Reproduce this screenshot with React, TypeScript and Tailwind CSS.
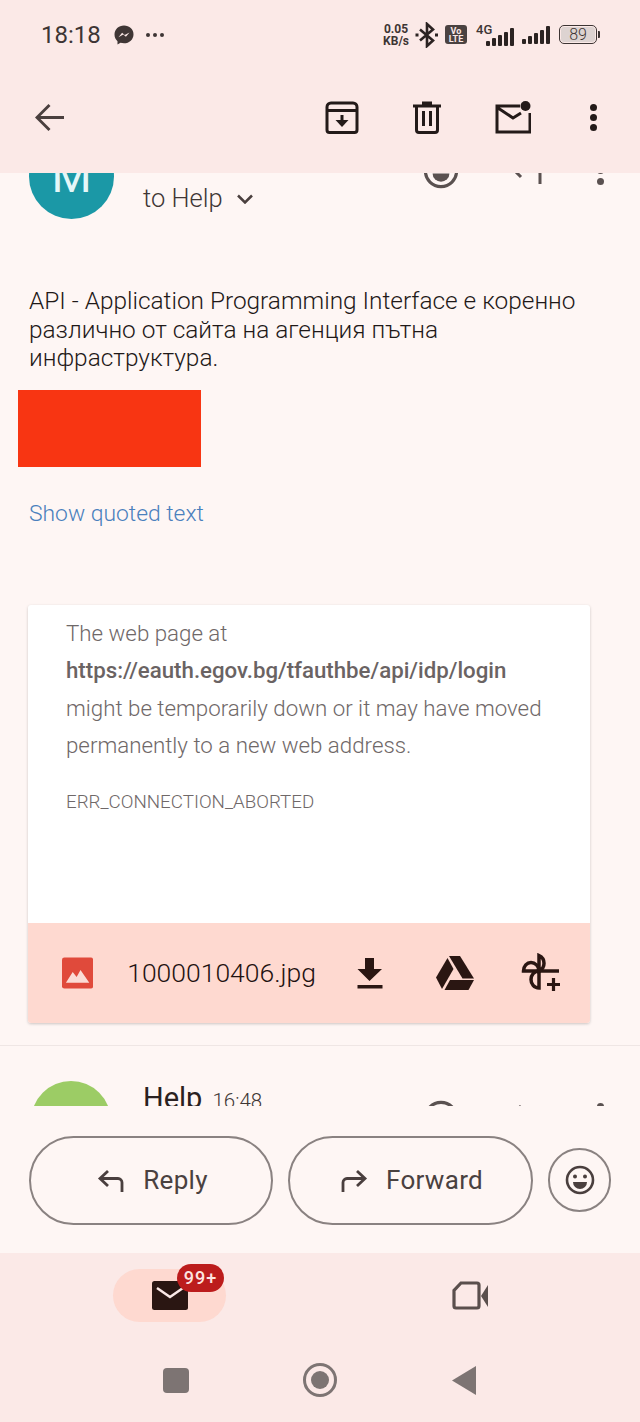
import React from "react";

const Dark = "#4a3f3e";

const Messenger = () => (
  <svg width="20" height="20" viewBox="0 0 20 20">
    <path d="M10 0.5C4.600 0.5 0.5 4.400 0.5 9.600c0 2.700 1.100 5 3 6.600v3.200l3-1.600c1.100.3 2.300.5 3.500.5 5.400 0 9.500-3.900 9.500-9.100S15.400.5 10 .5z" fill="#3f3635" />
    <path d="M4.500 12.200l3.600-4.400 2.600 2.200 4.800-2.600-3.600 4.400-2.600-2.200z" fill="#fbe9e7" />
  </svg>
);

const Bluetooth = () => (
  <svg width="24" height="26" viewBox="0 0 24 26" fill="none" stroke="#2b2322" strokeWidth="2.600">
    <path d="M5 7.500l13 11-6 5.500V2l6 5.500-13 11" />
    <rect x="0.5" y="11.500" width="3" height="3" fill="#2b2322" stroke="none" />
    <rect x="20" y="11.500" width="3" height="3" fill="#2b2322" stroke="none" />
  </svg>
);

const Signal = () => (
  <div className="flex items-end gap-[2px] h-[19px]">
    <div className="w-[4px] h-[5px] rounded-[1px] bg-[#2b2322]" />
    <div className="w-[4px] h-[8px] rounded-[1px] bg-[#2b2322]" />
    <div className="w-[4px] h-[11px] rounded-[1px] bg-[#2b2322]" />
    <div className="w-[4px] h-[14px] rounded-[1px] bg-[#2b2322]" />
    <div className="w-[4px] h-[18px] rounded-[1px] bg-[#2b2322]" />
  </div>
);

const StatusBar = () => (
  <div className="h-[69px] pl-[41px] pr-[40px] flex items-center justify-between">
    <div className="flex items-center">
      <span className="text-[24px] leading-none text-[#3d3534]">18:18</span>
      <div className="ml-[13px] flex"><Messenger /></div>
      <div className="ml-[12px] flex gap-[3px]">
        <div className="w-[4px] h-[4px] rounded-full bg-[#3d3534]" />
        <div className="w-[4px] h-[4px] rounded-full bg-[#3d3534]" />
        <div className="w-[4px] h-[4px] rounded-full bg-[#3d3534]" />
      </div>
    </div>
    <div className="flex items-center">
      <div className="flex flex-col items-center text-[12px] leading-[12px] font-bold text-[#3d3534]">
        <span>0.05</span>
        <span>KB/s</span>
      </div>
      <div className="ml-[6px] flex"><Bluetooth /></div>
      <div className="ml-[6px] w-[22px] h-[19px] rounded-[3px] bg-[#4a4241] flex flex-col items-center justify-center text-[9px] leading-[8px] font-bold text-[#fbe9e7]">
        <span>Vo</span>
        <span>LTE</span>
      </div>
      <div className="ml-[8px] relative w-[39px] h-[22px] flex justify-end items-end">
        <span className="absolute left-[1px] top-[-1px] text-[13px] leading-[13px] font-medium text-[#3d3534]">4G</span>
        <Signal />
      </div>
      <div className="ml-[8px]"><Signal /></div>
      <div className="ml-[9px] flex items-center">
        <div className="w-[38px] h-[19px] rounded-[5px] border border-[#3d3534] p-[1px] flex">
          <div className="flex-1 rounded-[3px] bg-[#ddd3d1] flex items-center justify-center text-[16px] font-light leading-none text-[#3d3534]">89</div>
        </div>
        <div className="ml-[1px] w-[2px] h-[7px] rounded-r-[1px] bg-[#3d3534]" />
      </div>
    </div>
  </div>
);

const Toolbar = () => (
  <div className="h-[104px] pl-[35px] pr-[43px] pb-[8px] flex items-center justify-between">
    <svg width="29" height="29" viewBox="0 0 30 30" fill="none" stroke={Dark} strokeWidth="3">
      <path d="M30 15H3M15 2L2 15l13 13" />
    </svg>
    <div className="flex items-center">
      <svg width="34" height="33" viewBox="0 0 34 33" fill="none" stroke="#231a19" strokeWidth="3">
        <path d="M2 9V6a4 4 0 0 1 4-4h22a4 4 0 0 1 4 4v3M2 6v23a2.500 2.500 0 0 0 2.500 2.500h25A2.500 2.500 0 0 0 32 29V6M3 9.500h28" />
        <path d="M17 14v8" />
        <path d="M10.500 19h13L17 26z" fill="#231a19" stroke="none" />
      </svg>
      <svg className="ml-[53px]" width="30" height="33" viewBox="0 0 30 33" fill="none" stroke="#231a19" strokeWidth="3">
        <path d="M1 5h28M10 2h10M4.500 5v24a2.500 2.500 0 0 0 2.500 2.500h16a2.500 2.500 0 0 0 2.500-2.500V5M11.500 10v15M18.500 10v15" />
      </svg>
      <svg className="ml-[53px]" width="36" height="33" viewBox="0 0 36 33" fill="none" stroke="#231a19" strokeWidth="3">
        <path d="M25 5H2v26h33V12M3 7l15 10 8-5" />
        <circle cx="30.500" cy="5" r="5" fill="#231a19" stroke="none" />
      </svg>
      <div className="ml-[59px] flex flex-col gap-[3px]">
        <div className="w-[7px] h-[7px] rounded-full bg-[#231a19]" />
        <div className="w-[7px] h-[7px] rounded-full bg-[#231a19]" />
        <div className="w-[7px] h-[7px] rounded-full bg-[#231a19]" />
      </div>
    </div>
  </div>
);

const SmileIcon = ({ size, color }: { size: number; color: string }) => (
  <svg width={size} height={size} viewBox="0 0 30 30">
    <circle cx="15" cy="15" r="13" fill="none" stroke={color} strokeWidth="2.600" />
    <circle cx="10" cy="11.500" r="2" fill={color} />
    <circle cx="20" cy="11.500" r="2" fill={color} />
    <path d="M8 17h14a7 7 0 0 1-14 0z" fill={color} />
  </svg>
);

const MessageActions = () => (
  <div className="flex items-start">
    <SmileIcon size={36} color="#5a5150" />
    <svg className="ml-[51px] mt-[5px]" width="32" height="26" viewBox="0 0 32 26" fill="none" stroke="#5a5150" strokeWidth="3">
      <path d="M11 1L2 10l9 9M2 10h22a6 6 0 0 1 6 6v10" />
    </svg>
    <div className="ml-[55px] mt-[3px] flex flex-col gap-[4px]">
      <div className="w-[7px] h-[7px] rounded-full bg-[#5a5150]" />
      <div className="w-[7px] h-[7px] rounded-full bg-[#5a5150]" />
      <div className="w-[7px] h-[7px] rounded-full bg-[#5a5150]" />
    </div>
  </div>
);

const ImageIcon = () => (
  <svg width="32" height="32" viewBox="0 0 32 32">
    <rect width="32" height="32" rx="2.500" fill="#e04a3b" />
    <path d="M4 26l7-11 4 5 4-7 9 13z" fill="#fbdcd5" />
  </svg>
);

const DownloadIcon = () => (
  <svg width="26" height="32" viewBox="0 0 26 32" fill="#2a1612">
    <path d="M8 1h9v11h8L12.500 24 0.500 12H8z" />
    <rect x="0.500" y="28" width="25" height="3.500" />
  </svg>
);

const DriveIcon = () => (
  <svg width="38" height="34" viewBox="0 0 38 34" fill="#2a1612">
    <path d="M13 0h11l14 22.500H26.500z" />
    <path d="M11.500 2L0 21.500 6 33l11.500-20z" />
    <path d="M8.500 34l5.500-10h24l-5.500 10z" />
  </svg>
);

// pinwheel: each petal is a half disc, the plus sits over the right one
const PhotosAddIcon = () => (
  <svg width="40" height="39" viewBox="0 0 40 39" fill="none" stroke="#2a1612" strokeWidth="3.500">
    <path d="M18 18V2.500a8.500 8.500 0 0 1 0 15.500z" />
    <path d="M18 18H2.500c0-5 3.500-8.500 7.500-8.500S18 13 18 18z" />
    <path d="M18 18v17c-5 0-8-4-8-8.500S13 18 18 18z" />
    <path d="M18 18h20" />
    <path d="M32.500 25v13M26 31.500h13" strokeWidth="3.200" />
  </svg>
);

const ReplyIcon = () => (
  <svg width="28" height="24" viewBox="0 0 28 24" fill="none" stroke={Dark} strokeWidth="2.800">
    <path d="M11 2L3 9.500 11 17M3 9.500h18a4 4 0 0 1 4 4V23" />
  </svg>
);

const ForwardIcon = () => (
  <svg width="28" height="24" viewBox="0 0 28 24" fill="none" stroke={Dark} strokeWidth="2.800">
    <path d="M17 2l8 7.500L17 17M25 9.500H7a4 4 0 0 0-4 4V23" />
  </svg>
);

export default function App() {
  return (
    <div className="w-[640px] h-[1422px] flex flex-col overflow-hidden bg-[#fef6f4] font-['Roboto',sans-serif]">
      <div className="shrink-0 h-[173px] bg-[#fbe9e7] flex flex-col">
        <StatusBar />
        <Toolbar />
      </div>

      <div className="h-[933px] shrink-0 overflow-hidden">
        <div className="mt-[-39px] pl-[29px] pr-[36px] flex">
          <div className="w-[85px] h-[85px] rounded-full bg-[#1b98a6] flex items-center justify-center text-[46px] text-[#e4f7f8]">M</div>
          <div className="ml-[29px] flex-1 flex justify-between">
            <div className="mt-[49px] flex items-center h-[30px] text-[25.500px] font-light text-[#3f3635]">
              <span>to Help</span>
              <svg className="ml-[14px] mt-[1px]" width="16" height="10" viewBox="0 0 16 10" fill="none" stroke={Dark} strokeWidth="2.500">
                <path d="M1 1.500l7 7 7-7" />
              </svg>
            </div>
            <div className="mt-[19px]"><MessageActions /></div>
          </div>
        </div>

        <p className="mt-[68px] pl-[29px] pr-[40px] text-[24.400px] font-light leading-[28.500px] text-[#1f1918]">
          API - Application Programming Interface е коренно различно от сайта на агенция пътна инфраструктура.
        </p>

        <div className="mt-[17px] ml-[18px] w-[183px] h-[77px] bg-[#f83512]" />

        <div className="mt-[32px] pl-[29px] text-[22.850px] font-light leading-[30px] text-[#4a80bd]">Show quoted text</div>

        <div className="mt-[76px] mx-[28px] w-[562px] h-[418px] rounded-[3px] bg-white shadow-[0_1px_3px_rgba(0,0,0,0.2)] flex flex-col overflow-hidden">
          <div className="h-[318px] px-[38px] pt-[10px] text-[#6f6868]">
            <p className="text-[22.300px] font-light leading-[37.500px]">The web page at</p>
            <p className="text-[22.250px] font-medium leading-[37.500px] text-[#6a6363]">https://eauth.egov.bg/tfauthbe/api/idp/login</p>
            <p className="text-[22.300px] font-light leading-[37.500px]">might be temporarily down or it may have moved permanently to a new web address.</p>
            <p className="mt-[27px] text-[18.750px] font-light leading-[20px]">ERR_CONNECTION_ABORTED</p>
          </div>
          <div className="h-[100px] bg-[#fed9d0] flex items-center pl-[34px] pr-[29px]">
            <ImageIcon />
            <span className="ml-[34px] text-[26.500px] font-light text-[#1f1210]">1000010406.jpg</span>
            <div className="ml-[41px] flex"><DownloadIcon /></div>
            <div className="ml-[53px] flex"><DriveIcon /></div>
            <div className="ml-[47px] flex"><PhotosAddIcon /></div>
          </div>
        </div>

        <div className="mt-[22px] h-[1px] bg-[#efe6e4]" />

        <div className="mt-[35px] pl-[31px] pr-[36px] flex">
          <div className="w-[80px] h-[80px] rounded-full bg-[#9ccc65]" />
          <div className="ml-[32px] flex-1 flex justify-between">
            <div className="flex items-baseline mt-[1px]">
              <span className="text-[29px] leading-[32px] text-[#2a2120]">Help</span>
              <span className="ml-[10px] text-[20.500px] font-light text-[#3f3635]">16:48</span>
            </div>
            <div className="mt-[19px]"><MessageActions /></div>
          </div>
        </div>
      </div>

      <div className="h-[147px] shrink-0 flex pl-[29px] pt-[30px] items-start">
        <button className="w-[244px] h-[89px] pl-[3px] rounded-full border-2 border-[#8a8281] flex items-center justify-center">
          <ReplyIcon />
          <span className="ml-[18px] text-[26px] tracking-[0.3px] text-[#4a4140]">Reply</span>
        </button>
        <button className="ml-[15px] w-[245px] h-[89px] pl-[2px] rounded-full border-2 border-[#8a8281] flex items-center justify-center">
          <ForwardIcon />
          <span className="ml-[18px] text-[26px] tracking-[0.3px] text-[#4a4140]">Forward</span>
        </button>
        <button className="ml-[15px] mt-[12px] w-[63px] h-[64px] rounded-full border-2 border-[#8a8281] flex items-center justify-center">
          <SmileIcon size={30} color={Dark} />
        </button>
      </div>

      <div className="flex-1 bg-[#fbe9e7] flex flex-col">
        <div className="h-[84px] flex">
          <div className="w-[340px] pl-[113px] pt-[16px]">
            <div className="relative w-[113px] h-[53px] rounded-full bg-[#fed9d0] flex items-center justify-center">
              <svg width="36" height="29" viewBox="0 0 36 29">
                <rect width="36" height="29" rx="2.500" fill="#2a1612" />
                <path d="M5 7l13 9 13-9" fill="none" stroke="#fbe9e7" strokeWidth="2.500" />
              </svg>
              <div className="absolute left-[64px] top-[-5px] w-[47px] h-[28px] rounded-full bg-[#bc1c1c] flex items-center justify-center text-[18px] leading-none font-medium tracking-[1px] text-[#fde4e0]">99+</div>
            </div>
          </div>
          <div className="flex-1 pl-[112px] pt-[28px]">
            <svg width="36" height="29" viewBox="0 0 36 29" fill="none">
              <path d="M9 2h16a2 2 0 0 1 2 2v21a2 2 0 0 1-2 2H4a2 2 0 0 1-2-2V9.500z" stroke="#5a4f4d" strokeWidth="3.200" />
              <path d="M29 15l7-11v22z" fill="#5a4f4d" />
            </svg>
          </div>
        </div>
        <div className="h-[86px] flex items-center pl-[163px]">
          <div className="w-[26px] h-[25px] rounded-[4px] bg-[#7d7473]" />
          <div className="ml-[114px] w-[34px] h-[34px] rounded-full border-[3px] border-[#7d7473] flex items-center justify-center">
            <div className="w-[18px] h-[18px] rounded-full bg-[#7d7473]" />
          </div>
          <svg className="ml-[115px]" width="24" height="29" viewBox="0 0 24 29">
            <path d="M24 0v29L0 14.500z" fill="#7d7473" />
          </svg>
        </div>
      </div>
    </div>
  );
}
